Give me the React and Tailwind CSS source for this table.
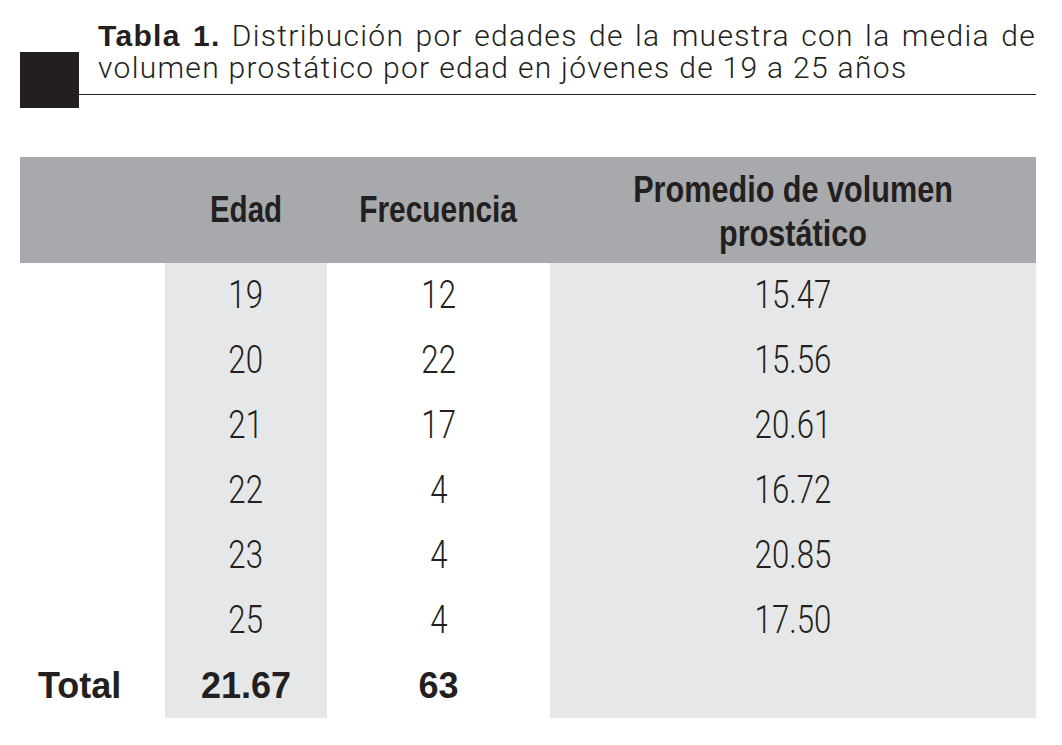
import React from "react";

const rows = [
  { edad: "19", freq: "12", vol: "15.47" },
  { edad: "20", freq: "22", vol: "15.56" },
  { edad: "21", freq: "17", vol: "20.61" },
  { edad: "22", freq: "4", vol: "16.72" },
  { edad: "23", freq: "4", vol: "20.85" },
  { edad: "25", freq: "4", vol: "17.50" },
];

const cols = "grid grid-cols-[145px_162px_223px_486px]";

// condensed look: scale glyphs horizontally around their centre
function Cond({ children, className = "" }) {
  return <span className={`inline-block whitespace-nowrap ${className}`}>{children}</span>;
}

function Num({ children }) {
  return (
    <span className="inline-block scale-x-[0.8] font-light" style={{ fontFamily: "Roboto, sans-serif" }}>
      {children}
    </span>
  );
}

export default function App() {
  return (
    <div className="w-[1062px] h-[745px] bg-white text-[#231f20] overflow-hidden" style={{ fontFamily: '"Liberation Sans", Arial, sans-serif' }}>
      {/* caption */}
      <div className="flex pl-[20px] pr-[26px]">
        <div className="w-[59px] h-[56px] mt-[52px] bg-[#231f20] shrink-0" />
        <div
          className="flex-1 h-[95px] border-b border-[#231f20] pl-[19px] pt-[20px] text-[30px] leading-[32px] tracking-[1.3px] font-light"
          style={{ fontFamily: "Roboto, sans-serif" }}
        >
          <div className="text-justify [text-align-last:justify] whitespace-nowrap">
            <span className="font-bold" style={{ fontFamily: '"Liberation Sans", Arial, sans-serif' }}>Tabla 1.</span> Distribución por edades de la muestra con la media de
          </div>
          <div>volumen prostático por edad en jóvenes de 19 a 25 años</div>
        </div>
      </div>

      {/* table */}
      <div className="mt-[49px] ml-[20px] w-[1016px]">
        <div className={`${cols} h-[106px] bg-[#a7a9ac] items-center text-center font-bold text-[36px] leading-[44px]`}>
          <div />
          <div><Cond className="scale-x-[0.82]">Edad</Cond></div>
          <div><Cond className="scale-x-[0.83]">Frecuencia</Cond></div>
          <div className="pt-[4px]">
            <Cond className="scale-x-[0.85]">Promedio de volumen</Cond>
            <br />
            <Cond className="scale-x-[0.85]">prostático</Cond>
          </div>
        </div>
        <div className={`${cols} text-center text-[39px]`}>
          {rows.map((r, i) => (
            <React.Fragment key={i}>
              <div className="h-[65px]" />
              <div className="h-[65px] bg-[#e6e7e8] flex items-center justify-center"><Num>{r.edad}</Num></div>
              <div className="h-[65px] flex items-center justify-center"><Num>{r.freq}</Num></div>
              <div className="h-[65px] bg-[#e6e7e8] flex items-center justify-center"><Num>{r.vol}</Num></div>
            </React.Fragment>
          ))}
          <div className="h-[65px] flex items-center pl-[18px] font-bold text-[36px]">Total</div>
          <div className="h-[65px] bg-[#e6e7e8] flex items-center justify-center font-bold text-[36px]">21.67</div>
          <div className="h-[65px] flex items-center justify-center font-bold text-[36px]">63</div>
          <div className="h-[65px] bg-[#e6e7e8]" />
        </div>
      </div>
    </div>
  );
}
